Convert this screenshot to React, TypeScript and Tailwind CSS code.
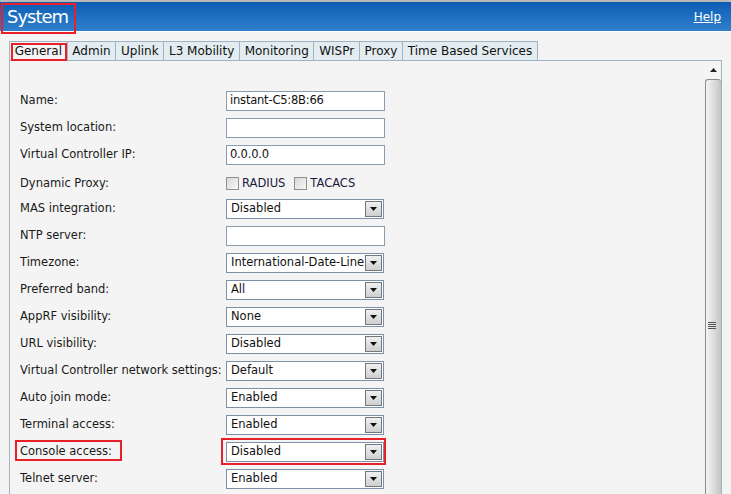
import type { ReactNode } from 'react'

const TABS = ['General', 'Admin', 'Uplink', 'L3 Mobility', 'Monitoring', 'WISPr', 'Proxy', 'Time Based Services']

type Row =
  | { label: string; kind: 'input'; value: string }
  | { label: string; kind: 'select'; value: string; hl?: boolean }
  | { label: string; kind: 'checks' }

const ROWS: Row[] = [
  { label: 'Name:', kind: 'input', value: 'instant-C5:8B:66' },
  { label: 'System location:', kind: 'input', value: '' },
  { label: 'Virtual Controller IP:', kind: 'input', value: '0.0.0.0' },
  { label: 'Dynamic Proxy:', kind: 'checks' },
  { label: 'MAS integration:', kind: 'select', value: 'Disabled' },
  { label: 'NTP server:', kind: 'input', value: '' },
  { label: 'Timezone:', kind: 'select', value: 'International-Date-Line' },
  { label: 'Preferred band:', kind: 'select', value: 'All' },
  { label: 'AppRF visibility:', kind: 'select', value: 'None' },
  { label: 'URL visibility:', kind: 'select', value: 'Disabled' },
  { label: 'Virtual Controller network settings:', kind: 'select', value: 'Default' },
  { label: 'Auto join mode:', kind: 'select', value: 'Enabled' },
  { label: 'Terminal access:', kind: 'select', value: 'Enabled' },
  { label: 'Console access:', kind: 'select', value: 'Disabled', hl: true },
  { label: 'Telnet server:', kind: 'select', value: 'Enabled' },
]

function TextBox({ value }: { value: string }) {
  return (
    <div className="flex h-[20px] w-[159px] items-center border border-[#8a9cb2] bg-white px-[3px] text-[11.5px] tracking-[-0.2px] text-[#111]">
      {value}
    </div>
  )
}

function SelectBox({ value }: { value: string }) {
  return (
    <div className="relative flex h-[20px] w-[158px] items-center overflow-hidden border border-[#7d90a8] bg-white">
      <span className="whitespace-nowrap pl-[4px] text-[#111]">{value}</span>
      <span className="absolute bottom-px right-px top-px flex w-[17px] items-center justify-center border border-[#6f7780] bg-gradient-to-b from-[#f0f0f0] to-[#cfcfcf]">
        <svg width="7" height="4" viewBox="0 0 7 4">
          <path d="M0 0h7L3.5 4z" fill="#111" />
        </svg>
      </span>
    </div>
  )
}

function Check({ label }: { label: string }) {
  return (
    <span className="flex items-center gap-[3px] text-[#1a1a40]">
      <span className="h-[13px] w-[13px] border border-[#8f8f8f] bg-gradient-to-br from-[#d8d8d8] to-[#f8f8f8]" />
      {label}
    </span>
  )
}

function Highlight({ children, className }: { children: ReactNode; className: string }) {
  return <span className={`border-2 border-[#e8202a] ${className}`}>{children}</span>
}

export default function App() {
  return (
    <div className="h-[494px] w-[731px] overflow-hidden bg-[#f4f4f4] font-['DejaVu_Sans',sans-serif] text-[11.5px] text-[#1a1a1a]">
      <div className="h-[2px] bg-[#b9b9b9]" />
      {/* title bar */}
      <div className="relative flex h-[29px] items-center justify-between bg-gradient-to-b from-[#0a5db4] to-[#3080cc] pl-[7px] pr-[10px]">
        <span className="text-[18px] leading-none tracking-[-1px] text-white">System</span>
        <span className="text-[12px] text-white underline">Help</span>
        <span className="absolute left-[1px] top-[1px] h-[31px] w-[75px] border-2 border-[#e8202a]" />
      </div>
      <div className="h-px bg-white" />

      {/* tabs */}
      <div className="ml-[9px] mt-[9px] flex h-[19px]">
        {TABS.map((t, i) => (
          <div
            key={t}
            className={`relative flex items-center border border-b-0 border-[#9fb3c3] px-[4.7px] text-[12px] leading-none text-[#111] ${
              i === 0 ? 'bg-[#f4f4f4]' : 'bg-[#e3edf1]'
            } ${i > 0 ? '-ml-px' : ''}`}
          >
            {t}
            {i === 0 && <span className="absolute -bottom-[1px] left-[1px] right-0 top-[1px] border-2 border-[#e8202a]" />}
          </div>
        ))}
      </div>

      {/* panel */}
      <div className="ml-[9px] flex h-[500px] w-[713px] border border-[#9fb3c3]">
        <div className="flex-1 pl-[10px] pt-[26px]">
          {ROWS.map((r) => (
            <div key={r.label} className={`flex h-[27px] items-center ${r.kind === 'checks' ? 'pt-[4px]' : ''}`}>
              <div className="w-[206px] shrink-0">
                {'hl' in r && r.hl ? (
                  <Highlight className="-ml-[5px] pb-px pl-[3px] pr-[8px] pt-[2px]">{r.label}</Highlight>
                ) : (
                  r.label
                )}
              </div>
              {r.kind === 'input' && <TextBox value={r.value} />}
              {r.kind === 'select' &&
                (r.hl ? (
                  <span className="-ml-[5px] border-2 border-[#e8202a] py-[1.5px] pl-[3px]">
                    <SelectBox value={r.value} />
                  </span>
                ) : (
                  <SelectBox value={r.value} />
                ))}
              {r.kind === 'checks' && (
                <div className="flex gap-[9px]">
                  <Check label="RADIUS" />
                  <Check label="TACACS" />
                </div>
              )}
            </div>
          ))}
        </div>
        {/* scrollbar */}
        <div className="flex w-[16px] flex-col">
          <div className="flex h-[18px] items-center justify-center">
            <svg width="7" height="4" viewBox="0 0 7 4">
              <path d="M3.5 0L7 4H0z" fill="#222" />
            </svg>
          </div>
          <div className="relative flex-1 rounded-t-[3px] border border-r-0 border-[#8a8a8a] bg-gradient-to-r from-[#f4f4f4] via-[#dedede] to-[#c4c4c4]">
            <div className="absolute left-[2px] top-[242px] flex w-[8px] flex-col gap-[1px]">
              <span className="h-px bg-[#555]" />
              <span className="h-px bg-[#555]" />
              <span className="h-px bg-[#555]" />
              <span className="h-px bg-[#555]" />
            </div>
          </div>
        </div>
      </div>
    </div>
  )
}
